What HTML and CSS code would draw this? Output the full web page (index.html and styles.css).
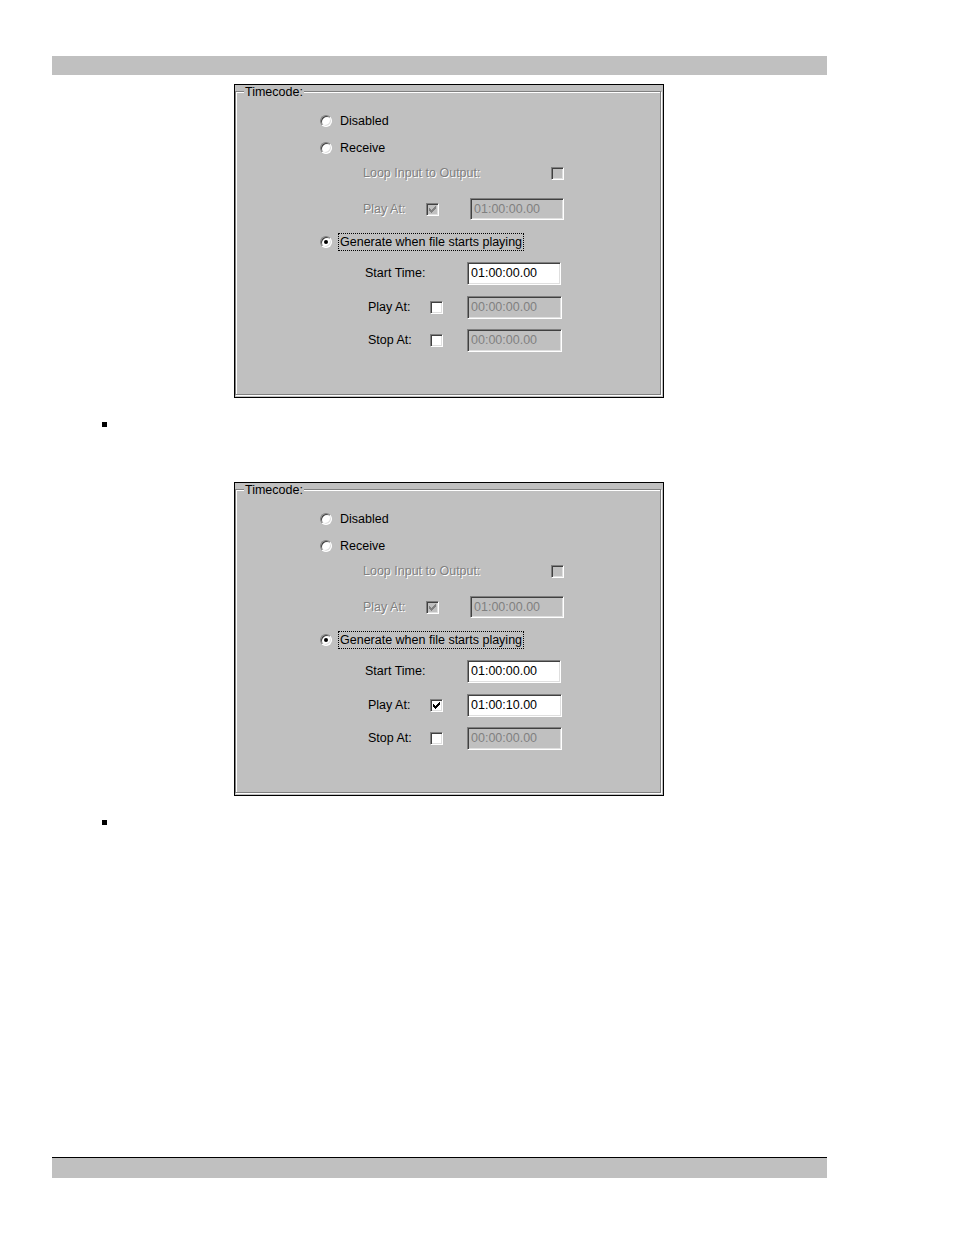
FILE: index.html
```html
<!DOCTYPE html>
<html>
<head>
<meta charset="utf-8">
<link rel="stylesheet" href="styles.css">
</head>
<body>
<div class="page">
  <div class="bar bar-top"></div>

  <div class="dialog dialog-1">
    <div class="group">
      <span class="legend">Timecode:</span>
      <div class="row row-1 indent-radio"><span class="radio"></span><span class="radio-label">Disabled</span></div>
      <div class="row row-2 indent-radio"><span class="radio"></span><span class="radio-label">Receive</span></div>
      <div class="row row-3 indent-sub"><span class="label disabled w-loop">Loop Input to Output:</span><span class="check check-disabled"></span></div>
      <div class="row row-4 indent-sub"><span class="label disabled w-playrx">Play At:</span><span class="check check-disabled"><svg class="tick" viewBox="0 0 7 7" width="7" height="7"><path d="M0 2h1v3h-1z M1 3h1v3h-1z M2 4h1v3h-1z M3 3h1v3h-1z M4 2h1v3h-1z M5 1h1v3h-1z M6 0h1v3h-1z"/></svg></span><span class="field field-disabled field-rx">01:00:00.00</span></div>
      <div class="row row-5 indent-radio"><span class="radio checked"></span><span class="focus">Generate when file starts playing</span></div>
      <div class="row row-6 indent-start"><span class="label w-start">Start Time:</span><span class="field field-start">01:00:00.00</span></div>
      <div class="row row-7 indent-gen"><span class="label w-gen">Play At:</span><span class="check"></span><span class="field field-disabled field-gen">00:00:00.00</span></div>
      <div class="row row-8 indent-gen"><span class="label w-gen">Stop At:</span><span class="check"></span><span class="field field-disabled field-gen">00:00:00.00</span></div>
    </div>
  </div>

  <span class="bullet bullet-1"></span>

  <div class="dialog dialog-2">
    <div class="group">
      <span class="legend">Timecode:</span>
      <div class="row row-1 indent-radio"><span class="radio"></span><span class="radio-label">Disabled</span></div>
      <div class="row row-2 indent-radio"><span class="radio"></span><span class="radio-label">Receive</span></div>
      <div class="row row-3 indent-sub"><span class="label disabled w-loop">Loop Input to Output:</span><span class="check check-disabled"></span></div>
      <div class="row row-4 indent-sub"><span class="label disabled w-playrx">Play At:</span><span class="check check-disabled"><svg class="tick" viewBox="0 0 7 7" width="7" height="7"><path d="M0 2h1v3h-1z M1 3h1v3h-1z M2 4h1v3h-1z M3 3h1v3h-1z M4 2h1v3h-1z M5 1h1v3h-1z M6 0h1v3h-1z"/></svg></span><span class="field field-disabled field-rx">01:00:00.00</span></div>
      <div class="row row-5 indent-radio"><span class="radio checked"></span><span class="focus">Generate when file starts playing</span></div>
      <div class="row row-6 indent-start"><span class="label w-start">Start Time:</span><span class="field field-start">01:00:00.00</span></div>
      <div class="row row-7 indent-gen"><span class="label w-gen">Play At:</span><span class="check"><svg class="tick" viewBox="0 0 7 7" width="7" height="7"><path d="M0 2h1v3h-1z M1 3h1v3h-1z M2 4h1v3h-1z M3 3h1v3h-1z M4 2h1v3h-1z M5 1h1v3h-1z M6 0h1v3h-1z"/></svg></span><span class="field field-gen">01:00:10.00</span></div>
      <div class="row row-8 indent-gen"><span class="label w-gen">Stop At:</span><span class="check"></span><span class="field field-disabled field-gen">00:00:00.00</span></div>
    </div>
  </div>

  <span class="bullet bullet-2"></span>

  <div class="bar bar-bottom"></div>
</div>
</body>
</html>
```

FILE: styles.css
```css
* { box-sizing: border-box; }

body {
  margin: 0;
  background: #fff;
  color: #000;
  font-family: "Liberation Sans", Arial, sans-serif;
  font-size: 12.5px;
}

.page {
  display: flex;
  flex-direction: column;
  align-items: flex-start;
}

.bar {
  width: 775px;
  height: 19px;
  margin-left: 52px;
  background: #c0c0c0;
}

.bar-top { margin-top: 56px; }

.bar-bottom {
  margin-top: 332px;
  height: 21px;
  border-top: 1px solid #000;
}

.dialog {
  display: flex;
  width: 430px;
  height: 314px;
  margin-left: 234px;
  padding: 6px 2px 2px 0;
  border: 1px solid #000;
  background: #c0c0c0;
}

.dialog-1 { margin-top: 9px; }
.dialog-2 { margin-top: 55px; }

.group {
  position: relative;
  flex: 1;
  display: flex;
  flex-direction: column;
  padding-top: 18px;
  border: 1px solid #808080;
  box-shadow: inset 1px 1px 0 #fff, 1px 1px 0 #fff;
}

.legend {
  position: absolute;
  left: 8px;
  top: -7px;
  padding: 0 1px;
  line-height: 14px;
  background: #c0c0c0;
}

.row {
  display: flex;
  align-items: center;
  height: 22px;
  white-space: nowrap;
}

.row-2 { margin-top: 5px; }
.row-3 { margin-top: 3px; }
.row-4 { margin-top: 14px; }
.row-5 { margin-top: 11px; }
.row-6 { margin-top: 9px; }
.row-7 { margin-top: 12px; }
.row-8 { margin-top: 11px; }

.indent-radio { padding-left: 84px; }
.indent-sub { padding-left: 127px; }
.indent-start { padding-left: 129px; }
.indent-gen { padding-left: 132px; }

.label { line-height: 14px; }
.disabled { color: #808080; text-shadow: 1px 1px 0 #fff; }

.w-loop { width: 188px; }
.w-playrx { width: 63px; }
.w-start { width: 102px; }
.w-gen { width: 62px; }

.radio {
  position: relative;
  flex: none;
  width: 12px;
  height: 12px;
  border-radius: 50%;
  border: 1px solid;
  border-color: #808080 #fff #fff #808080;
  box-shadow: inset 1px 1px 0 #404040, inset -1px -1px 0 #dfdfdf;
  background: #fff;
}

.radio.checked::after {
  content: "";
  position: absolute;
  left: 3px;
  top: 3px;
  width: 4px;
  height: 4px;
  border-radius: 50%;
  background: #000;
}

.radio-label {
  margin-left: 8px;
  line-height: 14px;
}

.focus {
  margin-left: 6px;
  padding: 0 1px;
  line-height: 16px;
  border: 1px dotted #000;
}

.check {
  display: flex;
  align-items: center;
  justify-content: center;
  flex: none;
  width: 13px;
  height: 13px;
  border: 1px solid;
  border-color: #808080 #fff #fff #808080;
  box-shadow: inset 1px 1px 0 #404040, inset -1px -1px 0 #dfdfdf;
  background: #fff;
  color: #000;
}

.check-disabled {
  background: #c0c0c0;
  color: #808080;
}

.tick { display: block; fill: currentColor; }

.field {
  display: flex;
  align-items: center;
  flex: none;
  width: 94px;
  height: 22px;
  padding-left: 3px;
  border: 1px solid;
  border-color: #808080 #fff #fff #808080;
  box-shadow: inset 1px 1px 0 #404040, inset -1px -1px 0 #dfdfdf;
  background: #fff;
  color: #000;
}

.field-disabled {
  background: #c0c0c0;
  color: #808080;
}

.field-rx { margin-left: 31px; }
.field-start { height: 23px; }
.field-gen { margin-left: 24px; width: 95px; height: 23px; }

.bullet {
  display: block;
  width: 5px;
  height: 5px;
  margin-left: 102px;
  background: #000;
}

.bullet-1 { margin-top: 24px; }
.bullet-2 { margin-top: 24px; }
```
